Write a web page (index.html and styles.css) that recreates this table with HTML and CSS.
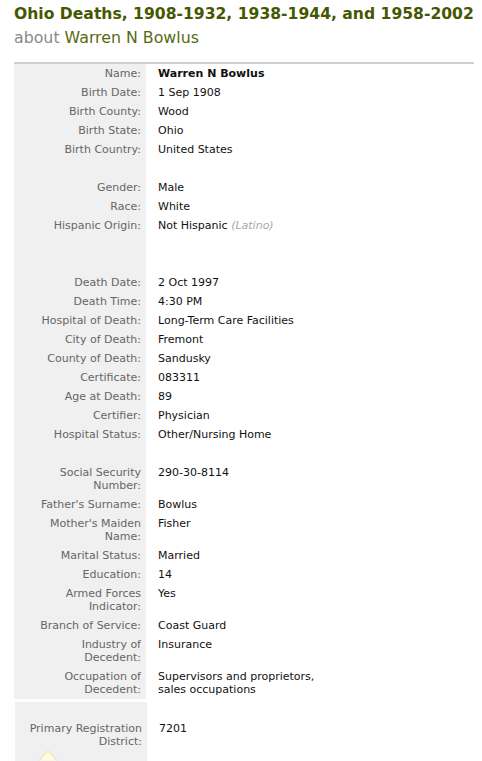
FILE: index.html
```html
<!DOCTYPE html>
<html>
<head>
<meta charset="utf-8">
<link rel="stylesheet" href="styles.css">
</head>
<body>
<div class="page">
  <h1 class="title">Ohio Deaths, 1908-1932, 1938-1944, and 1958-2002</h1>
  <p class="subtitle"><span class="about">about</span> <span class="person">Warren N Bowlus</span></p>

  <table class="record">
    <tr><th>Name:</th><td class="strong">Warren N Bowlus</td></tr>
    <tr><th>Birth Date:</th><td>1 Sep 1908</td></tr>
    <tr><th>Birth County:</th><td>Wood</td></tr>
    <tr><th>Birth State:</th><td>Ohio</td></tr>
    <tr><th>Birth Country:</th><td>United States</td></tr>
    <tr class="blank"><th>&nbsp;</th><td>&nbsp;</td></tr>
    <tr><th>Gender:</th><td>Male</td></tr>
    <tr><th>Race:</th><td>White</td></tr>
    <tr><th>Hispanic Origin:</th><td>Not Hispanic <em class="note">(Latino)</em></td></tr>
    <tr class="blank"><th>&nbsp;</th><td>&nbsp;</td></tr>
    <tr class="blank"><th>&nbsp;</th><td>&nbsp;</td></tr>
    <tr><th>Death Date:</th><td>2 Oct 1997</td></tr>
    <tr><th>Death Time:</th><td>4:30 PM</td></tr>
    <tr><th>Hospital of Death:</th><td>Long-Term Care Facilities</td></tr>
    <tr><th>City of Death:</th><td>Fremont</td></tr>
    <tr><th>County of Death:</th><td>Sandusky</td></tr>
    <tr><th>Certificate:</th><td>083311</td></tr>
    <tr><th>Age at Death:</th><td>89</td></tr>
    <tr><th>Certifier:</th><td>Physician</td></tr>
    <tr><th>Hospital Status:</th><td>Other/Nursing Home</td></tr>
    <tr class="blank"><th>&nbsp;</th><td>&nbsp;</td></tr>
    <tr><th>Social Security Number:</th><td>290-30-8114</td></tr>
    <tr><th>Father's Surname:</th><td>Bowlus</td></tr>
    <tr><th>Mother's Maiden Name:</th><td>Fisher</td></tr>
    <tr><th>Marital Status:</th><td>Married</td></tr>
    <tr><th>Education:</th><td>14</td></tr>
    <tr><th>Armed Forces Indicator:</th><td>Yes</td></tr>
    <tr><th>Branch of Service:</th><td>Coast Guard</td></tr>
    <tr><th>Industry of Decedent:</th><td>Insurance</td></tr>
    <tr><th>Occupation of Decedent:</th><td>Supervisors and proprietors,<br>sales occupations</td></tr>
  </table>

  <table class="record second">
    <tr class="blank short"><th>&nbsp;</th><td>&nbsp;</td></tr>
    <tr><th>Primary Registration District:</th><td>7201</td></tr>
    <tr class="tip-row"><th><svg class="tip" width="20" height="14" viewBox="0 0 20 14"><path d="M1 13.5 L10 4 L19 13.5" fill="#fffbe0" stroke="#ecdf9a" stroke-width="1"/></svg></th><td></td></tr>
  </table>
</div>
</body>
</html>
```

FILE: styles.css
```css
html, body {
  margin: 0;
  padding: 0;
  background: #ffffff;
}

.page {
  padding: 0 8px 0 14px;
  font-family: "DejaVu Sans", Verdana, sans-serif;
}

.title {
  margin: 0;
  padding-top: 5px;
  font-size: 15.6px;
  line-height: 19px;
  font-weight: bold;
  color: #445800;
  white-space: nowrap;
}

.subtitle {
  margin: 4px 0 0 0;
  font-size: 15.8px;
  line-height: 20px;
  font-weight: normal;
}

.about {
  color: #8a8a8a;
}

.person {
  color: #566b14;
}

.record {
  width: 460px;
  border-collapse: collapse;
  border-spacing: 0;
  font-size: 11px;
  line-height: 13px;
}

.record:first-of-type {
  margin-top: 14px;
  border-top: 2px solid #cfcfcf;
}

.record th {
  width: 132px;
  box-sizing: border-box;
  background: #f0f0f0;
  color: #666666;
  font-weight: normal;
  text-align: right;
  vertical-align: top;
  padding: 3px 5px 3px 10px;
}

.record td {
  color: #111111;
  vertical-align: top;
  padding: 3px 0 3px 12px;
}

.record td.strong {
  font-weight: bold;
}

.note {
  color: #a8a8a8;
}

.second {
  margin-top: 3px;
  margin-left: 1px;
}

.blank.short th, .blank.short td {
  padding: 3px 5px 1px 10px;
}

.tip-row th {
  text-align: left;
  padding: 0 0 0 23px;
  height: 12px;
  line-height: 0;
}

.tip {
  display: block;
  margin-top: -4px;
}
```
